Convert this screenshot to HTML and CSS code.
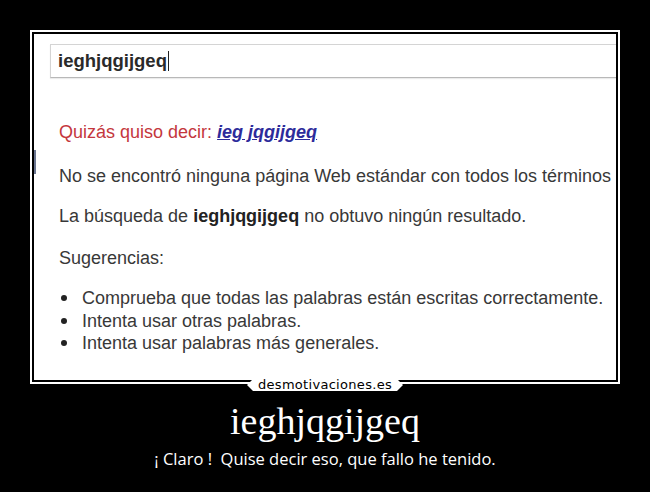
FILE: index.html
```html
<!DOCTYPE html>
<html lang="es">
<head>
<meta charset="utf-8">
<title>ieghjqgijgeq</title>
<link rel="stylesheet" href="styles.css">
</head>
<body>
<div class="poster">
  <div class="frame">
    <div class="shot">
      <div class="search"><span class="query">ieghjqgijgeq</span><span class="caret"></span></div>
      <p class="line suggest">Quizás quiso decir: <a class="fix">ieg jqgijgeq</a></p>
      <p class="line none">No se encontró ninguna página Web estándar con todos los términos</p>
      <p class="line noresult">La búsqueda de <b>ieghjqgijgeq</b> no obtuvo ningún resultado.</p>
      <p class="line tips">Sugerencias:</p>
      <ul class="list">
        <li>Comprueba que todas las palabras están escritas correctamente.</li>
        <li>Intenta usar otras palabras.</li>
        <li>Intenta usar palabras más generales.</li>
      </ul>
    </div>
    <div class="logo">desmotivaciones.es</div>
  </div>
  <h1 class="title">ieghjqgijgeq</h1>
  <p class="caption">¡ Claro !&nbsp; Quise decir eso, que fallo he tenido.</p>
</div>
</body>
</html>
```
FILE: styles.css
```css
html, body {
  margin: 0;
  padding: 0;
  background: #000;
}
body {
  width: 650px;
  height: 492px;
  overflow: hidden;
}
.poster {
  display: flex;
  flex-direction: column;
  align-items: center;
  padding-top: 30px;
}
.frame {
  position: relative;
  width: 582px;
  border: 2px solid #fff;
  padding: 2px;
  background: #000;
}
.shot {
  position: relative;
  height: 346px;
  background: #fff;
  overflow: hidden;
  font-family: "Liberation Sans", Arial, sans-serif;
  font-size: 18px;
  color: #383838;
  white-space: nowrap;
}
.shot::before {
  content: "";
  position: absolute;
  left: 0;
  top: 116px;
  width: 2px;
  height: 24px;
  background: #6a7590;
}
.search {
  display: flex;
  align-items: center;
  margin: 10px 0 0 16px;
  width: 640px;
  height: 32px;
  border: 1px solid #d4d4d4;
  border-bottom-color: #b8b8b8;
  box-shadow: 0 1px 1px rgba(0,0,0,0.08);
  padding-left: 7px;
}
.query {
  font-weight: bold;
  font-size: 18.5px;
  color: #2a2a2a;
}
.caret {
  display: inline-block;
  width: 1px;
  height: 20px;
  background: #222;
  margin-left: 1px;
}
.line {
  margin: 0 0 0 25px;
  line-height: 22px;
}
.suggest {
  margin-top: 43px;
  color: #c4373d;
}
.fix {
  color: #2d2b9b;
  font-weight: bold;
  font-style: italic;
  text-decoration: underline;
}
.none { margin-top: 22px; }
.noresult { margin-top: 18px; }
.noresult b { color: #222; }
.tips { margin-top: 20px; }
.list {
  list-style: none;
  margin: 18px 0 0 25px;
  padding: 0;
}
.list li {
  display: flex;
  align-items: center;
  line-height: 22.5px;
}
.list li::before {
  content: "";
  width: 6px;
  height: 6px;
  border-radius: 50%;
  background: #222;
  margin: 0 15px 0 2px;
  flex: none;
}
.logo {
  position: absolute;
  left: 50%;
  bottom: -9px;
  transform: translateX(-50%);
  width: 156px;
  height: 12px;
  background: #fff;
  clip-path: polygon(6px 0, 150px 0, 156px 6px, 150px 12px, 6px 12px, 0 6px);
  color: #000;
  font-family: "DejaVu Sans", sans-serif;
  font-size: 13px;
  line-height: 12px;
  letter-spacing: 0.3px;
  text-align: center;
}
.title {
  margin: 15px 0 0;
  font-family: "Liberation Serif", "Times New Roman", serif;
  font-weight: normal;
  font-size: 38px;
  line-height: 44px;
  color: #fff;
}
.caption {
  margin: 5px 0 0;
  font-family: "Open Sans", sans-serif;
  font-size: 16.5px;
  line-height: 22px;
  color: #fff;
}
```
